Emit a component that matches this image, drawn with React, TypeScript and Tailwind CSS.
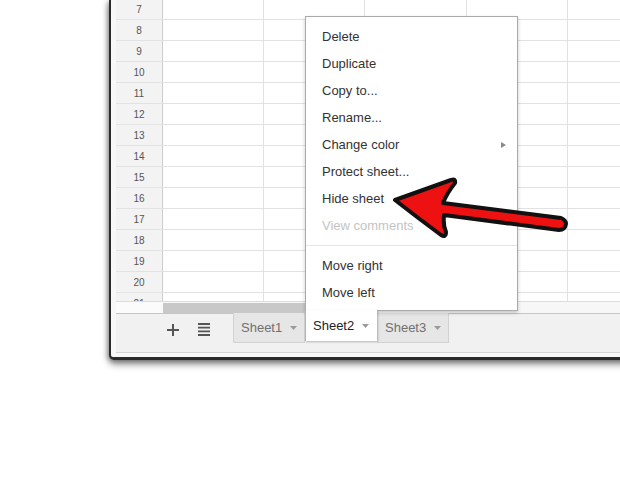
import React from "react"

const rowNums = [8, 9, 10, 11, 12, 13, 14, 15, 16, 17, 18, 19, 20]

function Cells() {
  return (
    <>
      <div className="w-[101px] shrink-0 border-r border-[#e2e2e2]" />
      <div className="w-[101px] shrink-0 border-r border-[#e2e2e2]" />
      <div className="w-[102px] shrink-0 border-r border-[#e2e2e2]" />
      <div className="w-[101px] shrink-0 border-r border-[#e2e2e2]" />
      <div className="w-[101px] shrink-0 border-r border-[#e2e2e2]" />
    </>
  )
}

function Caret() {
  return (
    <svg width="7" height="4" viewBox="0 0 7 4" className="ml-[8px] mt-[1px]">
      <path d="M0 0 L7 0 L3.5 4 Z" fill="#9a9a9a" />
    </svg>
  )
}

function MenuItem({ label, muted }: { label: string; muted?: boolean }) {
  return (
    <div
      className={`flex h-[27px] items-center pl-[16px] text-[13px] ${
        muted ? "text-[#c4c4c4]" : "text-[#333]"
      }`}
    >
      {label}
    </div>
  )
}

export default function App() {
  return (
    <div className="relative h-[479px] w-[620px] overflow-hidden bg-white font-['Liberation_Sans',Arial,sans-serif]">
      {/* window */}
      <div className="ml-[109px] w-[560px] rounded-bl-[5px] border-b-[3px] border-l-2 border-[#2b2b2b] bg-[#f7f7f7] pb-[4px] pl-[5px] shadow-[0_4px_7px_rgba(0,0,0,0.5),-2px_1px_4px_rgba(0,0,0,0.2)]">
        <div className="flex flex-col bg-white">
          <div className="flex h-[20px] border-b border-[#e2e2e2]">
            <div className="flex w-[47px] shrink-0 items-center justify-center border-r border-[#cdcdcd] bg-[#f3f3f3] text-[10px] text-[#555]">
              7
            </div>
            <Cells />
          </div>
          {rowNums.map((n) => (
            <div key={n} className="flex h-[21px] border-b border-[#e2e2e2]">
              <div className="flex w-[47px] shrink-0 items-center justify-center border-r border-[#cdcdcd] bg-[#f3f3f3] text-[10px] text-[#555]">
                {n}
              </div>
              <Cells />
            </div>
          ))}
          <div className="flex h-[8px] overflow-hidden">
            <div className="w-[47px] shrink-0 border-r border-[#cdcdcd] bg-[#f3f3f3]">
              <div className="flex h-[20px] items-center justify-center text-[10px] text-[#555]">21</div>
            </div>
            <Cells />
          </div>
          {/* scroll strip */}
          <div className="flex h-[12px] border-t border-[#dcdcdc] bg-[#f7f7f7]">
            <div className="w-[47px] shrink-0 bg-[#fbfbfb]" />
            <div className="mt-[1px] h-[10px] w-[170px] bg-[#c8c8c8]" />
          </div>
          {/* tab bar */}
          <div className="flex h-[40px] items-start border-b border-t border-b-[#d4d4d4] border-t-[#c6c6c6] bg-[#f1f1f1]">
            <svg width="12" height="12" viewBox="0 0 12 12" className="ml-[51px] mt-[10px]">
              <path d="M6 0 V12 M0 6 H12" stroke="#555" strokeWidth="2" />
            </svg>
            <svg width="12" height="13" viewBox="0 0 12 13" className="ml-[19px] mt-[9px]">
              <path d="M0 1 H12 M0 4.7 H12 M0 8.3 H12 M0 12 H12" stroke="#555" strokeWidth="1.8" />
            </svg>
            <div className="-mt-px ml-[23px] flex h-[30px] w-[72px] items-center border border-t-0 border-[#d2d2d2] bg-[#e6e6e6] pl-[7px] text-[13px] text-[#707070]">
              Sheet1
              <Caret />
            </div>
            <div className="relative z-20 -mt-[4px] flex h-[31px] w-[72px] items-center border-l border-[#b5b5b5] bg-white pl-[7px] text-[13px] text-[#222] shadow-[1px_1px_2px_rgba(0,0,0,0.25)]">
              Sheet2
              <Caret />
            </div>
            <div className="-mt-px flex h-[30px] w-[72px] items-center border border-t-0 border-l-0 border-[#d2d2d2] bg-[#e6e6e6] pl-[8px] text-[13px] text-[#707070]">
              Sheet3
              <Caret />
            </div>
          </div>
        </div>
      </div>

      {/* context menu */}
      <div className="absolute left-[305px] top-[16px] z-10 h-[295px] w-[213px] border border-[#aaaaaa] bg-white pt-[6px] shadow-[0_2px_4px_rgba(0,0,0,0.2)]">
        <MenuItem label="Delete" />
        <MenuItem label="Duplicate" />
        <MenuItem label="Copy to..." />
        <MenuItem label="Rename..." />
        <div className="flex h-[27px] items-center justify-between pl-[16px] pr-[11px] text-[13px] text-[#333]">
          Change color
          <svg width="5" height="6" viewBox="0 0 5 6">
            <path d="M0 0 L5 3 L0 6 Z" fill="#8a8a8a" />
          </svg>
        </div>
        <MenuItem label="Protect sheet..." />
        <MenuItem label="Hide sheet" />
        <MenuItem label="View comments" muted />
        <div className="my-[6px] h-px bg-[#e5e5e5]" />
        <MenuItem label="Move right" />
        <MenuItem label="Move left" />
      </div>

      {/* red arrow callout */}
      <svg
        className="pointer-events-none absolute left-0 top-0 z-30"
        width="620"
        height="479"
        viewBox="0 0 620 479"
      >
        <path
          d="M395 200 Q423 190 451 180 Q456 178 455 183 Q447 193 443 203 L561 218 Q566 220 566 224 Q565 230 559 230 L444 215 Q443 226 446 232 Q446 238 441 235 Q418 218 395 200 Z"
          fill="#ee1111"
          stroke="#111"
          strokeWidth="4"
          strokeLinejoin="round"
        />
      </svg>
    </div>
  )
}
